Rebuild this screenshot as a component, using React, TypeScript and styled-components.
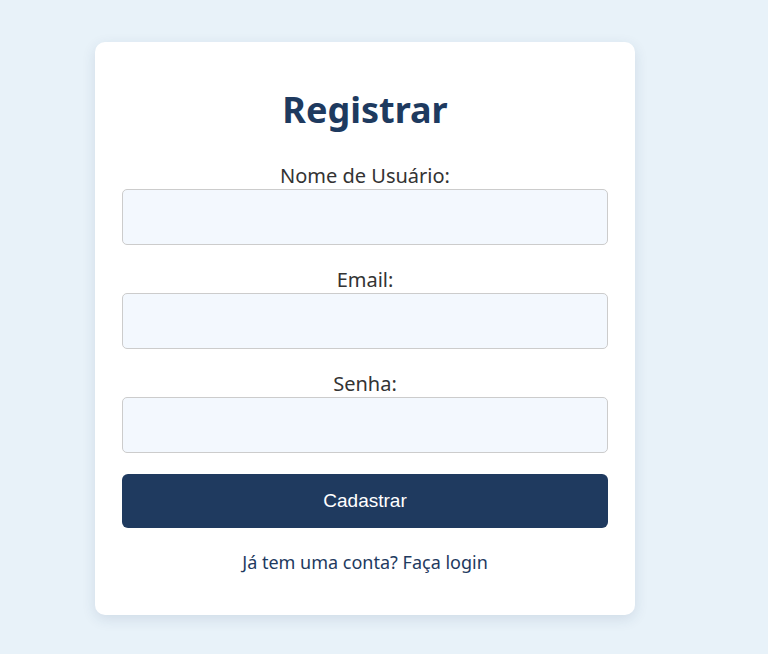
import React from "react";
import styled, { createGlobalStyle } from "styled-components";

const GlobalStyle = createGlobalStyle`
  body {
    margin: 0;
    background: #e8f2f9;
    font-family: "Noto Sans", "Open Sans", sans-serif;
  }
`;

export default function App() {
  return (
    <Page>
      <GlobalStyle />
      <Card>
        <Title>Registrar</Title>
        <Form onSubmit={(e) => e.preventDefault()}>
          <Field>
            <Label htmlFor="username">Nome de Usuário:</Label>
            <Input id="username" type="text" />
          </Field>
          <Field>
            <Label htmlFor="email">Email:</Label>
            <Input id="email" type="email" />
          </Field>
          <Field>
            <Label htmlFor="password">Senha:</Label>
            <Input id="password" type="password" />
          </Field>
          <Button type="submit">Cadastrar</Button>
        </Form>
        <Footer>
          Já tem uma conta? <LoginLink href="#">Faça login</LoginLink>
        </Footer>
      </Card>
    </Page>
  );
}

const Page = styled.div`
  min-height: 654px;
  padding: 42px 0 0 95px;
  box-sizing: border-box;
`;

const Card = styled.div`
  width: 540px;
  box-sizing: border-box;
  padding: 42px 27px 40px;
  background: #ffffff;
  border-radius: 10px;
  box-shadow: 0 4px 14px rgba(30, 58, 95, 0.12);
  text-align: center;
`;

const Title = styled.h2`
  margin: 0 0 26px;
  font-size: 36px;
  line-height: 52px;
  font-weight: 700;
  color: #1e3a5f;
`;

const Form = styled.form`
  display: flex;
  flex-direction: column;
`;

const Field = styled.div`
  display: flex;
  flex-direction: column;
  margin-bottom: 21px;
`;

const Label = styled.label`
  font-size: 20px;
  line-height: 27px;
  color: #333333;
`;

const Input = styled.input`
  height: 56px;
  box-sizing: border-box;
  border: 1px solid #cccccc;
  border-radius: 5px;
  background: #f3f8fe;
  padding: 0 12px;
  font-size: 16px;
  outline: none;
`;

const Button = styled.button`
  height: 54px;
  border: none;
  border-radius: 6px;
  background: #1f3a5f;
  color: #ffffff;
  font-family: "Liberation Sans", Arial, sans-serif;
  font-size: 19px;
  cursor: pointer;
`;

const Footer = styled.p`
  margin: 21px 0 0;
  font-size: 18px;
  line-height: 26px;
  color: #1e3a5f;
`;

const LoginLink = styled.a`
  color: inherit;
  text-decoration: none;
`;
